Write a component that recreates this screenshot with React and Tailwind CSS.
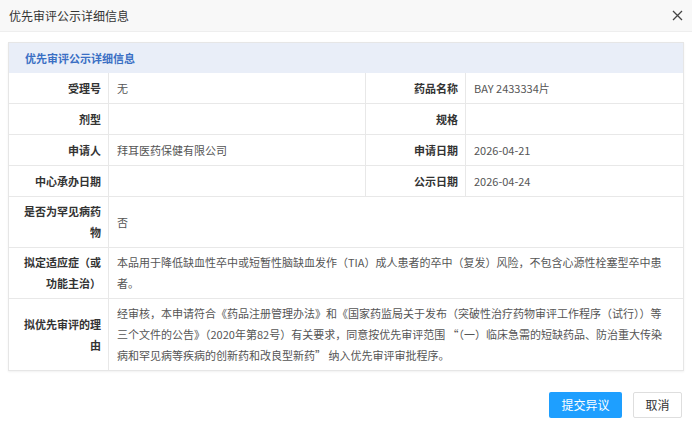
import React from "react";

const F = { fontFamily: '"Noto Sans CJK SC", "Microsoft YaHei", sans-serif' };

function Label({ children, className = "" }) {
  return (
    <div className={"flex items-center justify-end text-right font-bold text-[#333] pl-[10px] pr-[7px] leading-[21px] border-r border-b border-[#e8e8e8] " + className}>
      <span>{children}</span>
    </div>
  );
}

function Value({ children, className = "" }) {
  return (
    <div className={"flex items-center text-[#555] px-[8px] leading-[21px] border-r border-b border-[#e8e8e8] " + className}>
      <span>{children}</span>
    </div>
  );
}

export default function App() {
  return (
    <div className="w-[692px] h-[425px] bg-white flex flex-col overflow-hidden" style={F}>
      <div className="h-[32px] shrink-0 bg-[#f8f8f8] border-b border-[#eeeeee] flex items-center justify-between pl-[9px] pr-[9px]">
        <span className="text-[12px] text-[#333]">优先审评公示详细信息</span>
        <svg width="11" height="11" viewBox="0 0 11 11">
          <path d="M1 1 L10 10 M10 1 L1 10" stroke="#444" strokeWidth="1.3" fill="none" />
        </svg>
      </div>
      <div className="pt-[10px] px-[8px]">
        <div className="border border-[#e6e6e6] shadow-[0_1px_2px_rgba(0,0,0,0.06)] text-[11px]">
          <div className="h-[30px] bg-[#e9eef8] flex items-center pl-[16px] text-[11px] font-bold text-[#3a6fc4]">
            优先审评公示详细信息
          </div>
          <div className="grid grid-cols-[100px_257px_100px_1fr]">
            <Label className="py-[4.5px]">受理号</Label>
            <Value className="py-[4.5px]">无</Value>
            <Label className="py-[4.5px]">药品名称</Label>
            <Value className="py-[4.5px] border-r-0">BAY 2433334片</Value>

            <Label className="py-[4.5px]">剂型</Label>
            <Value className="py-[4.5px]"></Value>
            <Label className="py-[4.5px]">规格</Label>
            <Value className="py-[4.5px] border-r-0"></Value>

            <Label className="py-[4.5px]">申请人</Label>
            <Value className="py-[4.5px]">拜耳医药保健有限公司</Value>
            <Label className="py-[4.5px]">申请日期</Label>
            <Value className="py-[4.5px] border-r-0">2026-04-21</Value>

            <Label className="py-[4.5px]">中心承办日期</Label>
            <Value className="py-[4.5px]"></Value>
            <Label className="py-[4.5px]">公示日期</Label>
            <Value className="py-[4.5px] border-r-0">2026-04-24</Value>

            <Label className="py-[4px]">是否为罕见病药物</Label>
            <Value className="py-[4px] col-span-3 border-r-0">否</Value>

            <Label className="py-[4px]">拟定适应症（或功能主治）</Label>
            <Value className="py-[4px] col-span-3 border-r-0">
              本品用于降低缺血性卒中或短暂性脑缺血发作（TIA）成人患者的卒中（复发）风险，不包含心源性栓塞型卒中患者。
            </Value>

            <Label className="py-[4px] border-b-0">拟优先审评的理由</Label>
            <Value className="py-[4px] col-span-3 border-r-0 border-b-0">
              经审核，本申请符合《药品注册管理办法》和《国家药监局关于发布（突破性治疗药物审评工作程序（试行））等
              <br />
              三个文件的公告》（2020年第82号）有关要求，同意按优先审评范围 “（一）临床急需的短缺药品、防治重大传染
              <br />
              病和罕见病等疾病的创新药和改良型新药” 纳入优先审评审批程序。
            </Value>
          </div>
        </div>
      </div>
      <div className="flex justify-end gap-[11px] pr-[10px] mt-auto mb-[7px]">
        <button className="h-[26px] w-[73px] bg-[#1e9fff] text-white text-[12px] rounded-[2px]">提交异议</button>
        <button className="h-[26px] w-[49px] bg-white border border-[#dedede] text-[#333] text-[12px] rounded-[2px]">取消</button>
      </div>
    </div>
  );
}
